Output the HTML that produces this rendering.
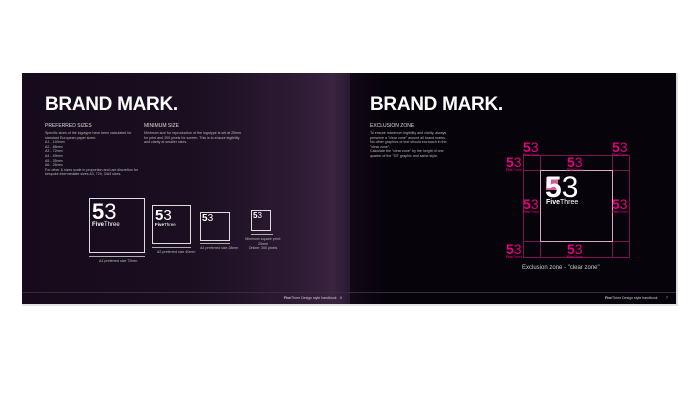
<!DOCTYPE html><html><head><style>
*{margin:0;padding:0;box-sizing:border-box}
body{width:700px;height:400px;background:#fff;position:relative;overflow:hidden;font-family:"Liberation Sans",sans-serif;color:#fff}
.pg{position:absolute;top:73px;height:231px}
#l{left:22px;width:328px;background:linear-gradient(90deg,#150b1b 0%,#1a0e20 50%,#2e1b34 85%,#3a2441 95%,#2a1830 100%)}
#r{left:350px;width:326px;background:linear-gradient(90deg,#120816 0%,#07030b 10%,#07030b 100%)}
.a{position:absolute}
h1{position:absolute;font-size:19px;font-weight:bold;letter-spacing:-.3px;line-height:20px}
.s{font-size:3.6px;color:#bbb;line-height:4.6px}
.h{font-size:5px;color:#ddd}
.ft{position:absolute;left:0;right:0;top:219px;height:1px;background:#3a2a40}
.b{position:absolute;border:1px solid #ddd}
.lg{position:absolute;line-height:1;white-space:nowrap}
.lg .n{font-weight:bold}.lg .t{font-weight:normal}
.p{color:#e5007e}
.ln{position:absolute;background:#7a1350}
</style></head><body>
<div class="pg" id="l">
<h1 style="left:23px;top:22px">BRAND MARK.</h1>
<div class="a h" style="left:23px;top:50px">PREFERRED SIZES</div>
<div class="a s" style="left:23px;top:58px;width:96px">Specific sizes of the logotype have been calculated for standard European paper sizes:<br>A1 - 140mm<br>A2 - 88mm<br>A3 - 72mm<br>A4 - 49mm<br>A5 - 35mm<br>A6 - 25mm<br>For other & sizes scale in proportion and use discretion for bespoke intermediate sizes A3, 72h, 3/A4 sizes.</div>
<div class="a h" style="left:122px;top:50px">MINIMUM SIZE</div>
<div class="a s" style="left:122px;top:58px;width:98px">Minimum size for reproduction of the logotype is set at 25mm for print and 300 pixels for screen. This is to ensure legibility and clarity at smaller sizes.</div>
<div class="b" style="left:67px;top:125px;width:56px;height:55px"></div>
<div class="lg" style="left:70px;top:128px;font-size:22px"><span class="n">5</span><span class="t">3</span></div>
<div class="lg" style="left:70px;top:149px;font-size:6px"><b>Five</b>Three</div>
<div class="a" style="left:67px;top:183px;width:56px;height:1px;background:#aaa"></div>
<div class="a s" style="left:77px;top:186px">A1 preferred size 72mm</div>
<div class="b" style="left:130px;top:132px;width:39px;height:39px"></div>
<div class="lg" style="left:133px;top:135px;font-size:15px"><span class="n">5</span><span class="t">3</span></div>
<div class="lg" style="left:133px;top:150px;font-size:4.5px"><b>Five</b>Three</div>
<div class="a" style="left:130px;top:174px;width:39px;height:1px;background:#aaa"></div>
<div class="a s" style="left:135px;top:177px">A2 preferred size 40mm</div>
<div class="b" style="left:178px;top:139px;width:30px;height:29px"></div>
<div class="lg" style="left:180px;top:141px;font-size:10px"><span class="n">5</span><span class="t">3</span></div>
<div class="a" style="left:178px;top:170px;width:30px;height:1px;background:#aaa"></div>
<div class="a s" style="left:178px;top:173px">A4 preferred size 28mm</div>
<div class="b" style="left:229px;top:137px;width:20px;height:21px"></div>
<div class="lg" style="left:231px;top:139px;font-size:8px"><span class="n">5</span><span class="t">3</span></div>
<div class="a" style="left:229px;top:161px;width:22px;height:1px;background:#aaa"></div>
<div class="a s" style="left:218px;top:164px;text-align:center;width:46px">Minimum square print: 25mm<br>Online: 300 pixels</div>
<div class="ft"></div>
<div class="a" style="left:262px;top:223px;font-size:3.5px;color:#ccc"><b>Five</b>Three Design style handbook</div>
<div class="a" style="left:318px;top:223px;font-size:3.5px;color:#ccc">6</div>
</div>
<div class="pg" id="r">
<h1 style="left:20px;top:22px">BRAND MARK.</h1>
<div class="a h" style="left:20px;top:50px">EXCLUSION ZONE</div>
<div class="a s" style="left:20px;top:58px;width:82px">To ensure maximum legibility and clarity, always preserve a "clear zone" around all brand marks.<br>No other graphics or text should encroach in the "clear zone".<br>Calculate the "clear zone" by the height of one quarter of the "53" graphic and same style.</div>
<div class="ln" style="left:173px;top:82px;width:1px;height:103px"></div>
<div class="ln" style="left:190px;top:82px;width:1px;height:103px"></div>
<div class="ln" style="left:262px;top:82px;width:1px;height:103px"></div>
<div class="ln" style="left:279px;top:82px;width:1px;height:103px"></div>
<div class="ln" style="left:173px;top:82px;width:107px;height:1px"></div>
<div class="ln" style="left:173px;top:97px;width:107px;height:1px"></div>
<div class="ln" style="left:173px;top:168px;width:107px;height:1px"></div>
<div class="ln" style="left:173px;top:184px;width:107px;height:1px"></div>
<div class="a" style="left:190px;top:97px;width:73px;height:72px;border:1px solid #d6aac4"></div>
<div class="a" style="left:196px;top:104px;width:12px;height:13px;background:#d65a9a"></div>
<div class="lg" style="left:195px;top:100px;font-size:30px"><span class="n">5</span><span class="t">3</span></div>
<div class="lg" style="left:196px;top:126px;font-size:7px"><b>Five</b><span class="t">Three</span></div>
<div class="lg p" style="left:173px;top:67px;font-size:14px"><span class="n">5</span><span class="t">3</span><div style="font-size:3.5px"><b>Five</b>Three</div></div>
<div class="lg p" style="left:262px;top:67px;font-size:14px"><span class="n">5</span><span class="t">3</span><div style="font-size:3.5px"><b>Five</b>Three</div></div>
<div class="lg p" style="left:156px;top:82px;font-size:14px"><span class="n">5</span><span class="t">3</span><div style="font-size:3.5px"><b>Five</b>Three</div></div>
<div class="lg p" style="left:217px;top:82px;font-size:14px"><span class="n">5</span><span class="t">3</span><div style="font-size:3.5px"><b>Five</b>Three</div></div>
<div class="lg p" style="left:173px;top:124px;font-size:14px"><span class="n">5</span><span class="t">3</span><div style="font-size:3.5px"><b>Five</b>Three</div></div>
<div class="lg p" style="left:262px;top:124px;font-size:14px"><span class="n">5</span><span class="t">3</span><div style="font-size:3.5px"><b>Five</b>Three</div></div>
<div class="lg p" style="left:156px;top:169px;font-size:14px"><span class="n">5</span><span class="t">3</span><div style="font-size:3.5px"><b>Five</b>Three</div></div>
<div class="lg p" style="left:217px;top:169px;font-size:14px"><span class="n">5</span><span class="t">3</span><div style="font-size:3.5px"><b>Five</b>Three</div></div>
<div class="a" style="left:172px;top:192px;font-size:6px;color:#ccc">Exclusion zone - "clear zone"</div>
<div class="ft"></div>
<div class="a" style="left:255px;top:223px;font-size:3.5px;color:#ccc"><b>Five</b>Three Design style handbook</div>
<div class="a" style="left:316px;top:223px;font-size:3.5px;color:#ccc">7</div>
</div>
<div class="a" style="left:676px;top:73px;width:2px;height:231px;background:#ddd"></div>
<div class="a" style="left:22px;top:304px;width:656px;height:2px;background:#e4e4e4"></div>
</body></html>
